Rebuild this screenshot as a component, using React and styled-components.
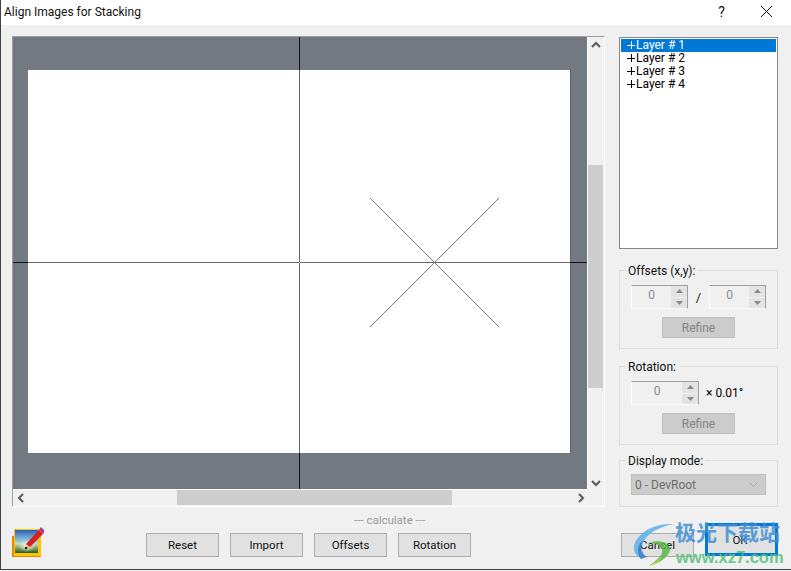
import React from 'react';
import styled, { createGlobalStyle } from 'styled-components';

const GlobalStyle = createGlobalStyle`
  html, body {
    margin: 0;
    width: 791px;
    height: 571px;
    overflow: hidden;
    background: #f0f0f0;
  }
  * { box-sizing: border-box; }
`;

const Window = styled.div`
  position: relative;
  width: 791px;
  height: 570px;
  display: flex;
  flex-direction: column;
  background: #f0f0f0;
  border-left: 1px solid #3f4347;
  border-bottom: 1px solid #3f4347;
  font-family: Roboto, "Liberation Sans", sans-serif;
  font-size: 11.5px;
  color: #000;
  overflow: hidden;
`;

const TitleBar = styled.div`
  height: 25px;
  flex: none;
  display: flex;
  align-items: center;
  background: #fff;
  padding: 0 2px 2px 3px;
`;

const Title = styled.div`
  flex: 1;
  font-size: 12px;
  color: #111;
`;

const TitleButton = styled.div`
  width: 45px;
  display: flex;
  justify-content: center;
  font-size: 14px;
  color: #111;
`;

const Client = styled.div`
  flex: 1;
  display: flex;
  flex-direction: column;
  padding: 11px 13px 0 11px;
`;

const Main = styled.div`
  display: flex;
  justify-content: space-between;
`;

const Viewer = styled.div`
  width: 593px;
  height: 471px;
  display: grid;
  grid-template-columns: 575px 16px;
  grid-template-rows: 453px 16px;
  background: #f0f0f0;
  border-top: 1px solid #a0a0a0;
  border-left: 1px solid #a0a0a0;
  border-right: 1px solid #fff;
  border-bottom: 1px solid #fff;
`;

const Canvas = styled.svg`
  display: block;
  width: 575px;
  height: 453px;
  border-right: 1px solid #fff;
  border-bottom: 1px solid #fff;
`;

const ScrollBar = styled.div`
  display: flex;
  flex-direction: ${p => (p.$vertical ? 'column' : 'row')};
  align-items: stretch;
  background: #f0f0f0;
  height: ${p => (p.$vertical ? '453px' : '15px')};
  width: ${p => (p.$vertical ? '15px' : '575px')};
`;

const ScrollArrow = styled.div`
  flex: none;
  width: 15px;
  height: 15px;
  display: flex;
  align-items: center;
  justify-content: center;
`;

const ScrollGap = styled.div`
  flex: ${p => p.$grow};
`;

const Thumb = styled.div`
  flex: ${p => p.$grow};
  background: #cdcdcd;
`;

const Corner = styled.div`
  background: #f0f0f0;
`;

const Side = styled.div`
  width: 159px;
  padding-top: 1px;
  display: flex;
  flex-direction: column;
  font-size: 12px;
`;

const LayerList = styled.div`
  height: 212px;
  margin-bottom: 14px;
  padding: 1px;
  background: #fff;
  border: 1px solid #828790;
`;

const LayerRow = styled.div`
  height: 13px;
  display: flex;
  align-items: center;
  padding: 0 0 1px 6px;
  line-height: 12px;
  color: ${p => (p.$selected ? '#fff' : '#000')};
  background: ${p => (p.$selected ? '#0078d7' : 'transparent')};
  white-space: pre;
`;

const LayerMark = styled.svg`
  display: block;
  flex: none;
  margin-right: 1px;
`;

const Group = styled.fieldset`
  margin: 0 0 ${p => p.$gap}px;
  min-width: 0;
  padding: ${p => p.$top}px 11px 0;
  height: ${p => p.$height}px;
  border: 1px solid #dcdcdc;
  display: flex;
  flex-direction: column;
`;

const GroupTitle = styled.legend`
  margin-left: -5px;
  padding: 2px 2px 0;
  line-height: 13px;
  color: #111;
`;

const SpinRow = styled.div`
  display: flex;
  align-items: center;
`;

const Spin = styled.div`
  width: ${p => p.$width}px;
  height: 24px;
  display: flex;
  background: #f0f0f0;
  border: 1px solid;
  border-color: #a0a0a0 #a0a0a0 #fff #fff;
`;

const SpinValue = styled.div`
  flex: 1;
  text-align: center;
  line-height: 19px;
  color: #8a8a96;
`;

const SpinButtons = styled.div`
  width: 16px;
  display: flex;
  flex-direction: column;
  gap: 1px;
  background: #f0f0f0;
`;

const SpinButton = styled.div`
  flex: 1;
  display: flex;
  align-items: center;
  justify-content: center;
  background: #e3e3e3;
`;

const Slash = styled.div`
  width: 21px;
  text-align: center;
  font-size: 13px;
  color: #222;
`;

const Unit = styled.div`
  margin-left: 7px;
  white-space: pre;
`;

const RefineButton = styled.div`
  width: 73px;
  height: 21px;
  margin: 8px 0 0 31px;
  display: flex;
  align-items: center;
  justify-content: center;
  background: #ccc;
  border: 1px solid #bfbfbf;
  color: #838383;
`;

const Select = styled.div`
  width: 135px;
  height: 21px;
  display: flex;
  align-items: center;
  justify-content: space-between;
  padding: 0 7px 0 3px;
  background: #ccc;
  border: 1px solid #bfbfbf;
  color: #6d6d6d;
`;

const Footer = styled.div`
  display: flex;
  align-items: flex-end;
  height: 50px;
`;

const AppIcon = styled.svg`
  display: block;
  flex: none;
  width: 32px;
  height: 33px;
  margin: 0 102px 0 0;
`;

const CalcColumn = styled.div`
  display: flex;
  flex-direction: column;
  gap: 6px;
`;

const CalcLabel = styled.div`
  align-self: flex-start;
  margin-left: 208px;
  line-height: 13px;
  color: #9a9a9a;
`;

const ButtonRow = styled.div`
  display: flex;
  gap: 11px;
`;

const Button = styled.div`
  width: 73px;
  height: 24px;
  display: flex;
  align-items: center;
  justify-content: center;
  padding-bottom: 1px;
  background: #e1e1e1;
  border: 1px solid #adadad;
  color: #111;
`;

const DialogButtons = styled.div`
  margin-left: auto;
  display: flex;
  align-items: flex-end;
  gap: 11px;
`;

const DefaultButton = styled(Button)`
  height: 33px;
  margin-bottom: 1px;
  padding: 0 3px 0 0;
  border: 3px solid #0078d7;
`;

const Watermark = styled.div`
  position: absolute;
  left: 631px;
  top: 520px;
  width: 155px;
  height: 48px;
  pointer-events: none;
`;

const WatermarkLogo = styled.svg`
  position: absolute;
  left: 0;
  top: 1px;
  width: 44px;
  height: 46px;
`;

const WatermarkName = styled.div`
  position: absolute;
  left: 43px;
  top: -2px;
  font-family: "Noto Sans CJK SC", sans-serif;
  font-size: 21px;
  font-weight: 700;
  line-height: 26px;
  color: #3f8fd6;
  opacity: 0.85;
  white-space: nowrap;
`;

const WatermarkUrl = styled.div`
  position: absolute;
  left: 44px;
  top: 26px;
  font-family: "Liberation Sans", sans-serif;
  font-size: 16.5px;
  font-weight: 700;
  line-height: 22px;
  color: #55c07a;
  opacity: 0.85;
  white-space: nowrap;
`;

const Chevron = ({ dir }) => {
  const points = {
    up: '1,6 5,2 9,6',
    down: '1,2 5,6 9,2',
    left: '6,1 2,5 6,9',
    right: '2,1 6,5 2,9',
  }[dir];
  const wide = dir === 'up' || dir === 'down';
  return (
    <svg width={wide ? 10 : 8} height={wide ? 8 : 10} viewBox={wide ? '0 0 10 8' : '0 0 8 10'}>
      <polyline points={points} fill="none" stroke="#5a5a5a" strokeWidth="2" />
    </svg>
  );
};

const SpinArrow = ({ up }) => (
  <svg width="7" height="4" viewBox="0 0 7 4">
    <polygon points={up ? '0,4 3.5,0 7,4' : '0,0 7,0 3.5,4'} fill="#8a8a8a" />
  </svg>
);

const SpinBox = ({ width }) => (
  <Spin $width={width}>
    <SpinValue>0</SpinValue>
    <SpinButtons>
      <SpinButton><SpinArrow up /></SpinButton>
      <SpinButton><SpinArrow /></SpinButton>
    </SpinButtons>
  </Spin>
);

const PlusMark = ({ color }) => (
  <LayerMark width="8" height="8" viewBox="0 0 8 8">
    <path d="M0 4.5 H8 M4.5 0 V8" stroke={color} strokeWidth="1" fill="none" />
  </LayerMark>
);

const CanvasDrawing = () => (
  <Canvas viewBox="0 0 574 452" shapeRendering="crispEdges">
    <rect width="574" height="452" fill="#737980" />
    <rect x="15" y="33" width="542" height="383" fill="#fff" />
    <line x1="557.5" y1="33" x2="557.5" y2="416" stroke="#5c6167" />
    <line x1="286.5" y1="0" x2="286.5" y2="33" stroke="#111" />
    <line x1="286.5" y1="416" x2="286.5" y2="452" stroke="#111" />
    <line x1="0" y1="225.5" x2="15" y2="225.5" stroke="#111" />
    <line x1="557" y1="225.5" x2="574" y2="225.5" stroke="#111" />
    <line x1="286.5" y1="33" x2="286.5" y2="225" stroke="#666" />
    <line x1="286.5" y1="226" x2="286.5" y2="416" stroke="#666" />
    <line x1="15" y1="225.5" x2="286" y2="225.5" stroke="#666" />
    <line x1="287" y1="225.5" x2="557" y2="225.5" stroke="#666" />
    <line x1="357" y1="161" x2="486" y2="290" stroke="#777" />
    <line x1="486" y1="161" x2="357" y2="290" stroke="#777" />
  </Canvas>
);

const StackIcon = () => (
  <AppIcon viewBox="0 0 32 33">
    <defs>
      <linearGradient id="sky" x1="0" y1="0" x2="0" y2="1">
        <stop offset="0" stopColor="#2a62b0" />
        <stop offset="0.45" stopColor="#8fc0e0" />
        <stop offset="0.6" stopColor="#c8dcb8" />
        <stop offset="1" stopColor="#2c5a18" />
      </linearGradient>
      <radialGradient id="glow" cx="0.5" cy="0.5" r="0.5">
        <stop offset="0" stopColor="#f4f6e0" />
        <stop offset="1" stopColor="#f4f6e0" stopOpacity="0" />
      </radialGradient>
    </defs>
    <rect x="0" y="12" width="5" height="21" fill="#e38a00" />
    <rect x="0" y="30" width="29" height="3" fill="#e38a00" />
    <rect x="2" y="5" width="27" height="27" fill="#ffc400" />
    <rect x="3" y="6" width="23" height="23" fill="url(#sky)" />
    <ellipse cx="15" cy="22" rx="9" ry="6" fill="url(#glow)" />
    <polygon points="14,20 27,6 31,10 18,23 14,24" fill="#d81e1e" />
    <polygon points="14,20 18,23 14,24" fill="#f0c090" />
    <polygon points="27,6 29,3 33,7 31,10" fill="#b03a90" />
    <rect x="13" y="23" width="2" height="2" fill="#111" />
  </AppIcon>
);

const App = () => {
  const layers = [1, 2, 3, 4];
  return (
    <>
      <GlobalStyle />
      <Window>
        <TitleBar>
          <Title>Align Images for Stacking</Title>
          <TitleButton>?</TitleButton>
          <TitleButton>
            <svg width="13" height="13" viewBox="0 0 13 13">
              <path d="M1 1 L12 12 M12 1 L1 12" stroke="#111" strokeWidth="1" fill="none" />
            </svg>
          </TitleButton>
        </TitleBar>
        <Client>
          <Main>
            <Viewer>
              <CanvasDrawing />
              <ScrollBar $vertical>
                <ScrollArrow><Chevron dir="up" /></ScrollArrow>
                <ScrollGap $grow={113} />
                <Thumb $grow={223} />
                <ScrollGap $grow={87} />
                <ScrollArrow><Chevron dir="down" /></ScrollArrow>
              </ScrollBar>
              <ScrollBar>
                <ScrollArrow><Chevron dir="left" /></ScrollArrow>
                <ScrollGap $grow={149} />
                <Thumb $grow={274} />
                <ScrollGap $grow={121} />
                <ScrollArrow><Chevron dir="right" /></ScrollArrow>
              </ScrollBar>
              <Corner />
            </Viewer>
            <Side>
              <LayerList>
                {layers.map(n => (
                  <LayerRow key={n} $selected={n === 1}>
                    <PlusMark color={n === 1 ? '#fff' : '#000'} />
                    {`Layer # ${n}`}
                  </LayerRow>
                ))}
              </LayerList>
              <Group $height={86} $top={7} $gap={10}>
                <GroupTitle>Offsets (x,y):</GroupTitle>
                <SpinRow>
                  <SpinBox width={57} />
                  <Slash>/</Slash>
                  <SpinBox width={57} />
                </SpinRow>
                <RefineButton>Refine</RefineButton>
              </Group>
              <Group $height={86} $top={7} $gap={8}>
                <GroupTitle>Rotation:</GroupTitle>
                <SpinRow>
                  <SpinBox width={68} />
                  <Unit>× 0.01°</Unit>
                </SpinRow>
                <RefineButton>Refine</RefineButton>
              </Group>
              <Group $height={54} $top={6} $gap={0}>
                <GroupTitle>Display mode:</GroupTitle>
                <Select>
                  0 - DevRoot
                  <svg width="9" height="5" viewBox="0 0 9 5">
                    <polyline points="0.5,0.5 4.5,4.5 8.5,0.5" fill="none" stroke="#a8a8a8" />
                  </svg>
                </Select>
              </Group>
            </Side>
          </Main>
          <Footer>
            <StackIcon />
            <CalcColumn>
              <CalcLabel>--- calculate ---</CalcLabel>
              <ButtonRow>
                <Button>Reset</Button>
                <Button>Import</Button>
                <Button>Offsets</Button>
                <Button>Rotation</Button>
              </ButtonRow>
            </CalcColumn>
            <DialogButtons>
              <Button>Cancel</Button>
              <DefaultButton>OK</DefaultButton>
            </DialogButtons>
          </Footer>
        </Client>
        <Watermark>
          <WatermarkLogo viewBox="0 0 44 46">
            <path d="M42 3 C24 2 6 10 2 25 C1 31 5 36 10 38 C6 30 10 17 22 10 C28 7 35 4 42 3 Z" fill="#5cb0e8" opacity="0.85" />
            <path d="M9 38 C4 31 6 24 10 20 C8 27 10 33 15 36 Z" fill="#2f78c0" opacity="0.8" />
            <path d="M17 22 C26 18 36 21 38 27 C39 33 30 42 17 45 C25 39 32 33 30 28 C28 24 23 22 17 22 Z" fill="#58b848" opacity="0.85" />
            <path d="M17 45 C24 42 28 38 30 35 C28 40 24 44 17 45 Z" fill="#e8d84a" opacity="0.9" />
          </WatermarkLogo>
          <WatermarkName>极光下载站</WatermarkName>
          <WatermarkUrl>www.xz7.com</WatermarkUrl>
        </Watermark>
      </Window>
    </>
  );
};

export default App;
